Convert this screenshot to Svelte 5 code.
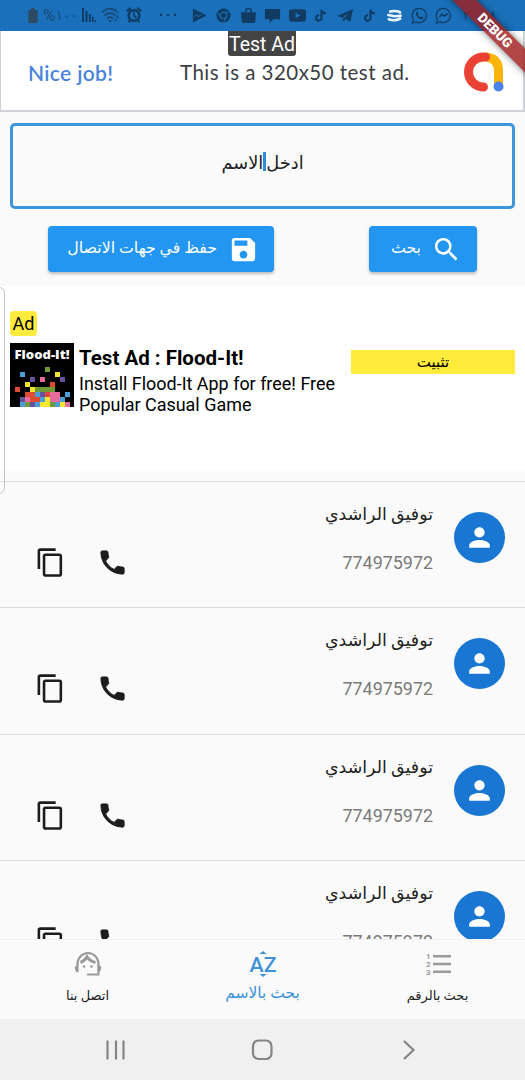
<script lang="ts">
  interface Contact {
    readonly id: number;
    readonly name: string;
    readonly phone: string;
  }

  const contacts: readonly Contact[] = [1, 2, 3, 4].map((id) => ({
    id,
    name: "توفيق الراشدي",
    phone: "774975972",
  }));

  const statusIcons = [
    "play",
    "chrome",
    "bag",
    "chat",
    "youtube",
    "tiktok",
    "telegram",
    "tiktok",
    "stack",
    "whatsapp",
    "messenger",
  ] as const;

  // one string per mosaic row, one letter per 5px tile
  const mosaic = [
    "......g....",
    ".b......y..",
    "...p.k...p.",
    "..y....r...",
    "r..ygggg...",
    "..rrbprkk.b",
    ".pkrrbykkb.",
    ".bgpbyygbyk",
  ];

  const tileColors: Record<string, string> = {
    g: "#6f9a35",
    b: "#4a9fd8",
    y: "#f3e62e",
    p: "#66529f",
    k: "#e76c9d",
    r: "#e04a32",
  };

  const tiles = mosaic.flatMap((line, row) =>
    [...line].flatMap((key, col) =>
      key === "." ? [] : [{ x: 5 + col * 5, y: 24 + row * 5, fill: tileColors[key] }]
    )
  );
</script>

<div class="screen">
  <header class="status-bar">
    <svg class="battery" viewBox="0 0 12 16"><path d="M4 0h4v2h3v14H1V2h3z" /></svg>
    <span class="percent"><b>%</b>١٠٠</span>
    <svg class="signal" viewBox="0 0 14 14">
      <path d="M0 0h2v14H0zM3.500 3h2v11h-2zM7 6h1.800v8H7zM10 9h1.500v5H10zM12.500 12H14v2h-1.500z" />
    </svg>
    <svg class="wifi" viewBox="0 0 20 16">
      <g fill="none" stroke="#174b78" stroke-width="1.700">
        <path d="M1 5.500Q9 -2 17 5.500M3.500 8.500Q9 3.500 14.500 8.500M6 11.500Q9 9 12 11.500" />
      </g>
      <path d="M8 13h2.500v2H8zM13 12l1.500 3 1.500-3zM15 11l1.500-3 1.500 3z" />
    </svg>
    <svg class="alarm" viewBox="0 0 16 16">
      <path d="M0 3.500 4 0l1.500 1.500-4 3.500zM16 3.500 12 0l-1.500 1.500 4 3.500z" />
      <circle cx="8" cy="8.500" r="5.300" fill="none" stroke="#103c63" stroke-width="2.600" />
      <path d="M7.200 5h1.600v3.500L11 10l-1 1.200-2.800-2zM3 12l2 1.500L3.500 16 2 15zM13 12l-2 1.500 1.500 2.500 1.500-1z" />
    </svg>
    <svg class="more" viewBox="0 0 18 4">
      <circle cx="2" cy="2" r="1.300" /><circle cx="9" cy="2" r="1.300" /><circle cx="16" cy="2" r="1.300" />
    </svg>
    <div class="app-icons">
      {#each statusIcons as icon, i (i)}
        <svg viewBox="0 0 18 18">
          {#if icon === "play"}
            <path d="M2 1.500 16.500 9 2 16.500z" />
            <path d="M3.500 10.500 6 8l2 2.500L11 8" fill="none" stroke="#1a70ba" />
          {:else if icon === "chrome"}
            <circle cx="9" cy="9" r="7.500" />
            <circle cx="9" cy="9" r="3.400" fill="none" stroke="#1a70ba" stroke-width="1.200" />
            <path d="M9 5.600h6.500M6 10.700 2.800 5.500M12 10.700 9 16" stroke="#1a70ba" />
          {:else if icon === "bag"}
            <path d="M1 5.500h16l-.8 9.500q-.2 2-2 2H3.800q-1.800 0-2-2z" />
            <path d="M6 6V4q0-2.500 3-2.500T12 4v2" fill="none" stroke="#103c63" stroke-width="1.600" />
          {:else if icon === "chat"}
            <path d="M1 2h16v11h-7l-4 4v-4H1z" />
          {:else if icon === "youtube"}
            <rect x="0" y="2.500" width="18" height="13" rx="3" />
            <path d="M7 6v6l5-3z" fill="#1a70ba" />
          {:else if icon === "tiktok"}
            <path d="M9 3v8.500a2.900 2.900 0 1 1-2.500-2.800M9 3q.5 3.500 4.500 3.700" fill="none" stroke="#103c63" stroke-width="2.200" />
          {:else if icon === "telegram"}
            <path d="M0 9.500 17 2l-3 14-4.500-3.500-3 3-.7-4.500zM6.500 10.500l.5 2.300 6-7.300z" fill-rule="evenodd" />
          {:else if icon === "stack"}
            <g fill="none" stroke="#eaf4ff" stroke-width="2.800" stroke-linecap="round">
              <path d="M4.500 4.800Q9 3.500 14 5L15 6M2.500 8.500 9 9.800l6.500-.5M3 13q6 2.500 12-.8" />
            </g>
          {:else if icon === "whatsapp"}
            <path d="M1.500 17l1-4A7.500 7.500 0 1 1 5.500 15.700z" fill="none" stroke="#103c63" stroke-width="1.300" />
            <path d="M5.500 5.500 7 5l1.200 2.500-.8 1.200q1 1.600 2.500 2.200l1-.9 2.300 1.200q-.5 2-2.300 2Q6 12 5.200 7z" />
          {:else}
            <path d="M1.500 17l1-4A7.500 7.500 0 1 1 5.500 15.700z" fill="none" stroke="#103c63" stroke-width="1.300" />
            <path d="M4.500 10.800 7.500 7.500l2.500 2 3.500-2.500" fill="none" stroke="#103c63" stroke-width="1.600" />
          {/if}
        </svg>
      {/each}
    </div>
    <span class="clock">٢٠:٢٨</span>
  </header>

  <section class="banner-ad">
    <span class="nice">Nice job!</span>
    <span class="banner-text">This is a 320x50 test ad.</span>
    <svg class="admob" viewBox="0 0 40 40">
      <g fill="none" stroke-width="9" stroke-linecap="round">
        <path d="M21 5Q34.500 5.500 34.500 19v15" stroke="#fbb40a" stroke-linecap="butt" />
        <path d="M21.500 5h-2A15 15 0 0 0 19.500 35" stroke="#ea4335" />
      </g>
      <circle cx="34.500" cy="34.500" r="5" fill="#4c82ee" />
    </svg>
    <span class="test-tag">Test Ad</span>
  </section>

  <div class="name-input" dir="rtl">
    <span>ادخل</span><i></i><span>الاسم</span>
  </div>

  <div class="buttons" dir="rtl">
    <button class="search">
      <svg viewBox="0 0 24 24">
        <path d="M15.500 14h-.79l-.28-.27A6.471 6.471 0 0 0 16 9.500 6.500 6.500 0 1 0 9.500 16c1.610 0 3.090-.59 4.230-1.570l.27.28v.79l5 4.990L20.490 19zm-6 0C7.010 14 5 11.990 5 9.500S7.010 5 9.500 5 14 7.010 14 9.500 11.990 14 9.500 14z" />
      </svg>
      <span>بحث</span>
    </button>
    <button class="save">
      <svg viewBox="0 0 24 24">
        <path d="M17 3H5a2 2 0 0 0-2 2v14a2 2 0 0 0 2 2h14c1.100 0 2-.9 2-2V7zm-5 16c-1.660 0-3-1.340-3-3s1.340-3 3-3 3 1.340 3 3-1.340 3-3 3zm3-10H5V5h10z" />
      </svg>
      <span>حفظ في جهات الاتصال</span>
    </button>
  </div>

  <section class="native-ad">
    <span class="ad-chip">Ad</span>
    <div class="ad-row">
      <svg class="flood" viewBox="0 0 64 64">
        <rect width="64" height="64" fill="#000" />
        <g shape-rendering="crispEdges">
          {#each tiles as tile}
            <rect x={tile.x} y={tile.y} width="5" height="5" fill={tile.fill} />
          {/each}
        </g>
        <text x="32" y="16" text-anchor="middle" textLength="55" lengthAdjust="spacingAndGlyphs">Flood-It!</text>
      </svg>
      <div class="ad-copy">
        <strong>Test Ad : Flood-It!</strong>
        <p>Install Flood-It App for free! Free<br />Popular Casual Game</p>
      </div>
      <span class="install">تثبيت</span>
    </div>
    <div class="edge-handle"></div>
  </section>

  <main dir="rtl">
    {#each contacts as contact (contact.id)}
      <article>
        <div class="avatar">
          <svg viewBox="0 0 24 24">
            <path d="M12 12c2.210 0 4-1.790 4-4s-1.790-4-4-4-4 1.790-4 4 1.790 4 4 4zm0 2c-2.670 0-8 1.340-8 4v2h16v-2c0-2.660-5.330-4-8-4z" />
          </svg>
        </div>
        <div class="details">
          <span class="name">{contact.name}</span>
          <span class="phone">{contact.phone}</span>
        </div>
        <div class="actions">
          <svg viewBox="0 0 24 24">
            <path d="M6.620 10.790c1.440 2.830 3.760 5.140 6.590 6.590l2.200-2.200c.27-.27.67-.36 1.020-.24 1.120.37 2.330.57 3.570.57.55 0 1 .45 1 1V20c0 .55-.45 1-1 1-9.390 0-17-7.610-17-17 0-.55.45-1 1-1h3.500c.55 0 1 .45 1 1 0 1.250.2 2.450.57 3.570.11.35.03.74-.25 1.020z" stroke="#1c1c1c" stroke-width=".7" />
          </svg>
          <svg viewBox="0 0 24 24">
            <path d="M16 1H4c-1.100 0-2 .9-2 2v14h2V3h12zm3 4H8c-1.100 0-2 .9-2 2v14c0 1.100.9 2 2 2h11c1.100 0 2-.9 2-2V7c0-1.100-.9-2-2-2zm0 16H8V7h11z" />
          </svg>
        </div>
      </article>
    {/each}
  </main>

  <nav dir="rtl">
    <a href="#number">
      <svg viewBox="0 0 28 28">
        <path d="M9 5h18v2.500H9zM9 12.700h18v2.500H9zM9 20.500h18v2.500H9z" />
        <g class="digits"><text x="2" y="9">1</text><text x="2" y="17">2</text><text x="2" y="25">3</text></g>
      </svg>
      <span>بحث بالرقم</span>
    </a>
    <a class="active" href="#name">
      <svg viewBox="0 0 28 28">
        <path d="M10.500 4 14 1l3.500 3zM10.500 24 14 27l3.500-3z" />
        <text class="letters" x="0.500" y="21.500" textLength="27" lengthAdjust="spacingAndGlyphs">AZ</text>
      </svg>
      <span>بحث بالاسم</span>
    </a>
    <a href="#contact">
      <svg viewBox="0 0 28 28">
        <g fill="none" stroke="#999" stroke-width="2">
          <path d="M3.500 16v-2a10.500 11 0 0 1 21 0v10.500H13" />
          <path d="M6.500 12.500Q10.500 11 13 6.800 16 11.500 21.500 12.500" stroke-width="3" />
        </g>
        <path d="M1 16.500 4.500 14v8.500Q1.500 22 1 19.500zM27 16.500 23.500 14v8.500q3-.5 3.500-3z" />
        <circle cx="10" cy="16.500" r="1.300" /><circle cx="17.500" cy="16.500" r="1.300" />
      </svg>
      <span>اتصل بنا</span>
    </a>
  </nav>

  <footer>
    <svg viewBox="0 0 24 24"><path d="M3.500 2.500v19M12 2.500v19M19.500 2.500v19" /></svg>
    <svg viewBox="0 0 24 24"><rect x="2" y="2.500" width="18.500" height="18.500" rx="5.500" /></svg>
    <svg viewBox="0 0 24 24"><path d="m7 3 9.500 9L7 21" /></svg>
  </footer>

  <div class="debug"><span>DEBUG</span></div>
</div>

<style>
  :global(body) {
    background: #fafafa;
  }

  .screen {
    position: relative;
    width: 525px;
    height: 1080px;
    overflow: hidden;
    background: #fafafa;
    color: #222;
    display: flex;
    flex-direction: column;
    font-family: Roboto, "DejaVu Sans", sans-serif;
  }

  svg {
    display: block;
    flex: none;
  }

  .status-bar {
    flex: none;
    height: 31px;
    padding: 0 0 1px 27px;
    box-sizing: border-box;
    background: #1a70ba;
    color: #174b78;
    fill: #103c63;
    display: flex;
    align-items: center;
  }

  .battery {
    width: 12px;
    height: 15px;
    fill: #2c4b62;
  }

  .percent {
    width: 36px;
    margin-left: 4px;
    display: flex;
    align-items: center;
    font-size: 14px;
    white-space: nowrap;
    direction: ltr;
    unicode-bidi: bidi-override;
  }

  .percent b {
    font-size: 17px;
    font-weight: 400;
  }

  .signal {
    width: 14px;
    height: 14px;
    margin-left: 3px;
  }

  .wifi {
    width: 20px;
    height: 16px;
    margin-left: 5px;
    fill: #174b78;
  }

  .alarm {
    width: 16px;
    height: 16px;
    margin-left: 5px;
  }

  .more {
    width: 18px;
    height: 4px;
    margin-left: 17px;
  }

  .app-icons {
    margin-left: 10px;
    width: 269px;
    display: flex;
    justify-content: space-around;
  }

  .app-icons svg {
    width: 17px;
    height: 17px;
  }

  .clock {
    margin-left: 7px;
    font-size: 14px;
  }

  .banner-ad {
    position: relative;
    flex: none;
    height: 81px;
    padding: 3px 19px 0 27px;
    box-sizing: border-box;
    border: 1px solid #cfd2d8;
    border-width: 0 2px 2px 1px;
    background: #fff;
    display: flex;
    align-items: center;
    font-family: Lato, sans-serif;
  }

  .nice {
    width: 152px;
    color: #4a84dc;
    font-weight: 600;
    font-size: 21px;
    letter-spacing: 0.35px;
  }

  .banner-text {
    color: #3c4043;
    font-size: 20.500px;
    letter-spacing: 0.47px;
    white-space: nowrap;
  }

  .admob {
    width: 40px;
    height: 40px;
    margin-left: auto;
  }

  .test-tag {
    position: absolute;
    top: 0;
    left: 227px;
    width: 68px;
    height: 25px;
    border-radius: 0 0 3px 3px;
    background: #444;
    color: #fff;
    line-height: 27px;
    text-align: center;
    font-family: Roboto, sans-serif;
    font-size: 19.500px;
    white-space: nowrap;
  }

  .name-input {
    flex: none;
    height: 86px;
    margin: 11px 10px 0;
    padding-bottom: 7px;
    box-sizing: border-box;
    border: 3px solid #3f95da;
    border-radius: 5px;
    display: flex;
    align-items: center;
    justify-content: center;
    font-size: 17.800px;
  }

  .name-input i {
    width: 3px;
    height: 19px;
    margin-bottom: 3px;
    background: #2d8cdb;
  }

  .buttons {
    flex: none;
    height: 46px;
    margin: 17px 48px 0;
    display: flex;
    justify-content: space-between;
  }

  button {
    border: 0;
    border-radius: 4px;
    background: #2396f2;
    box-shadow: 0 2px 3px rgb(0 0 0 / 25%);
    color: #fff;
    fill: #fff;
    display: flex;
    align-items: center;
    gap: 11px;
    font-family: inherit;
    font-size: 15.800px;
    white-space: nowrap;
  }

  button svg {
    width: 31px;
    height: 31px;
  }

  button span {
    padding-bottom: 3px;
  }

  .search {
    width: 108px;
    padding: 0 15px;
    gap: 10px;
  }

  .save {
    width: 226px;
    padding: 0 15px;
  }

  .native-ad {
    position: relative;
    flex: none;
    height: 191px;
    margin-top: 14px;
    padding: 25px 10px 0;
    box-sizing: border-box;
    background: linear-gradient(#fff 184px, #fafafa 184px);
    color: #000;
  }

  .ad-chip {
    width: 27px;
    height: 25px;
    border-radius: 4px;
    background: #ffeb3b;
    display: block;
    line-height: 26px;
    text-align: center;
    font-size: 18px;
  }

  .ad-row {
    margin-top: 7px;
    display: flex;
  }

  .flood {
    width: 64px;
    height: 64px;
  }

  .flood text {
    fill: #fff;
    font-family: "Open Sans", sans-serif;
    font-size: 12px;
    font-weight: 800;
  }

  .ad-copy {
    width: 272px;
    padding: 3px 0 0 5px;
    box-sizing: border-box;
    white-space: nowrap;
  }

  .ad-copy strong {
    display: block;
    font-size: 20.500px;
    line-height: 24px;
  }

  .ad-copy p {
    margin: 3px 0 0;
    font-size: 17.950px;
    line-height: 21px;
  }

  .install {
    width: 164px;
    height: 24px;
    margin: 7px 0 0 5px;
    background: #ffeb3b;
    line-height: 24px;
    text-align: center;
    font-size: 15px;
  }

  .edge-handle {
    position: absolute;
    top: 1px;
    left: -8px;
    width: 13px;
    height: 207px;
    box-sizing: border-box;
    border: 1px solid #c4c4c4;
    border-radius: 6px;
  }

  main {
    flex: none;
    height: 458px;
    margin-top: 4px;
    overflow: hidden;
  }

  article {
    height: 126.400px;
    padding: 0 20px 0 35px;
    box-sizing: border-box;
    border-top: 1.500px solid #dcdcdc;
    display: flex;
  }

  .avatar {
    width: 51px;
    height: 51px;
    margin-top: 30px;
    border-radius: 50%;
    background: #1976d2;
    fill: #fff;
    display: grid;
    place-items: center;
  }

  .avatar svg {
    width: 31px;
    height: 31px;
  }

  .details {
    margin-right: 21px;
    display: flex;
    flex-direction: column;
  }

  .name {
    height: 50px;
    padding-top: 19px;
    box-sizing: border-box;
    line-height: 26px;
    font-size: 17.400px;
    white-space: nowrap;
  }

  .phone {
    margin-top: 18px;
    color: #7b7b7b;
    line-height: 26px;
    font-size: 17.900px;
  }

  .actions {
    margin: 65px auto 0 0;
    fill: #1c1c1c;
    display: flex;
    gap: 31px;
  }

  .actions svg {
    width: 31px;
    height: 31px;
  }

  nav {
    flex: none;
    height: 80px;
    box-sizing: border-box;
    border-top: 1px solid #f1f1f1;
    background: #fafafa;
    display: grid;
    grid-template-columns: repeat(3, 175px);
  }

  nav a {
    padding-top: 10px;
    color: #222;
    fill: #999;
    display: flex;
    flex-direction: column;
    align-items: center;
    font-size: 13px;
    text-decoration: none;
    white-space: nowrap;
  }

  nav svg {
    width: 28px;
    height: 28px;
  }

  nav span {
    margin-top: 8px;
    line-height: 20px;
  }

  nav .active {
    color: #3c91d8;
    fill: #3c91d8;
    font-size: 15.500px;
  }

  nav .active span {
    margin-top: 5px;
  }

  .digits {
    direction: ltr;
    font-size: 8px;
    font-weight: 700;
  }

  .letters {
    direction: ltr;
    font-size: 21px;
    font-weight: 500;
  }

  footer {
    flex: none;
    height: 61px;
    padding: 0 104px;
    box-sizing: border-box;
    background: #f0f0f0;
    fill: none;
    stroke: #858585;
    stroke-width: 2.200;
    display: flex;
    align-items: center;
    justify-content: space-between;
  }

  footer svg {
    width: 24px;
    height: 24px;
  }

  .debug {
    position: absolute;
    top: 22px;
    left: 425px;
    width: 140px;
    height: 17px;
    background: rgb(160 30 30 / 82%);
    box-shadow: 0 0 7px rgb(0 0 0 / 50%);
    color: #fff;
    line-height: 17px;
    text-align: center;
    font-size: 13.400px;
    font-weight: 900;
    transform: rotate(45deg);
  }
</style>
